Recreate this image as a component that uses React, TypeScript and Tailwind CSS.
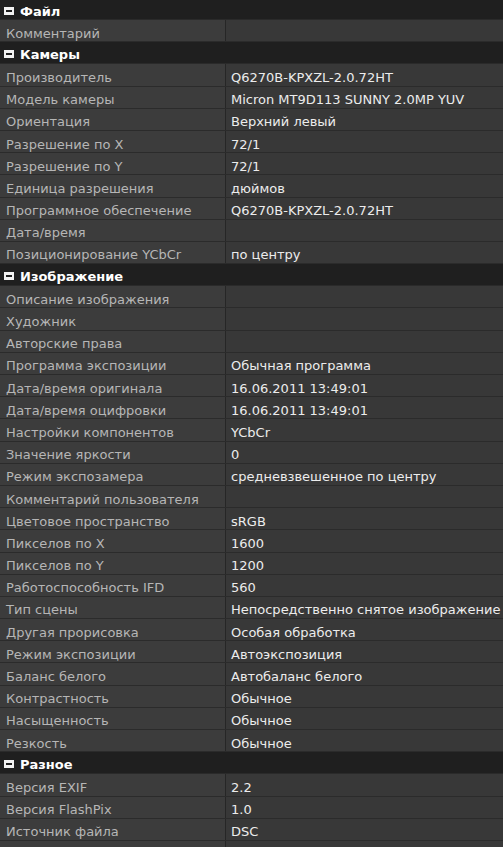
import React from "react";

type Row = [string, string];
type Section = { title: string; rows: Row[] };

const sections: Section[] = [
  { title: "Файл", rows: [["Комментарий", ""]] },
  {
    title: "Камеры",
    rows: [
      ["Производитель", "Q6270B-KPXZL-2.0.72HT"],
      ["Модель камеры", "Micron MT9D113 SUNNY 2.0MP YUV"],
      ["Ориентация", "Верхний левый"],
      ["Разрешение по X", "72/1"],
      ["Разрешение по Y", "72/1"],
      ["Единица разрешения", "дюймов"],
      ["Программное обеспечение", "Q6270B-KPXZL-2.0.72HT"],
      ["Дата/время", ""],
      ["Позиционирование YCbCr", "по центру"],
    ],
  },
  {
    title: "Изображение",
    rows: [
      ["Описание изображения", ""],
      ["Художник", ""],
      ["Авторские права", ""],
      ["Программа экспозиции", "Обычная программа"],
      ["Дата/время оригинала", "16.06.2011 13:49:01"],
      ["Дата/время оцифровки", "16.06.2011 13:49:01"],
      ["Настройки компонентов", "YCbCr"],
      ["Значение яркости", "0"],
      ["Режим экспозамера", "средневзвешенное по центру"],
      ["Комментарий пользователя", ""],
      ["Цветовое пространство", "sRGB"],
      ["Пикселов по X", "1600"],
      ["Пикселов по Y", "1200"],
      ["Работоспособность IFD", "560"],
      ["Тип сцены", "Непосредственно снятое изображение"],
      ["Другая прорисовка", "Особая обработка"],
      ["Режим экспозиции", "Автоэкспозиция"],
      ["Баланс белого", "Автобаланс белого"],
      ["Контрастность", "Обычное"],
      ["Насыщенность", "Обычное"],
      ["Резкость", "Обычное"],
    ],
  },
  {
    title: "Разное",
    rows: [
      ["Версия EXIF", "2.2"],
      ["Версия FlashPix", "1.0"],
      ["Источник файла", "DSC"],
      ["", ""],
    ],
  },
];

function Header({ title, first }: { title: string; first?: boolean }) {
  return (
    <div
      className={`flex items-center bg-[#1f1f1f] border-b border-[#2a2a2a] pt-[3px] ${
        first ? "h-[20px]" : "h-[22.2px]"
      }`}
    >
      <span className="ml-[4px] mr-[6px] flex h-[8px] w-[10px] items-center justify-center bg-[#f2f2f2]">
        <span className="h-[2px] w-[6px] bg-[#1f1f1f]" />
      </span>
      <span className="text-[13px] font-bold leading-none text-white">{title}</span>
    </div>
  );
}

function DataRow({ label, value }: { label: string; value: string }) {
  return (
    <div className="flex h-[22.2px] border-b border-[#2b2b2b]">
      <div className="flex w-[225px] shrink-0 items-center bg-[#3c3c3c] pl-[6px] pt-[5px] text-[13px] leading-none text-[#b6b6b6] whitespace-nowrap overflow-hidden">
        {label}
      </div>
      <div className="w-px bg-[#262626]" />
      <div className="flex flex-1 items-center bg-[#383838] pl-[5px] pt-[5px] text-[13px] leading-none text-[#ececec] whitespace-nowrap overflow-hidden">
        {value}
      </div>
    </div>
  );
}

export default function App() {
  return (
    <div
      className="h-[847px] w-[503px] overflow-hidden bg-[#1f1f1f]"
      style={{ fontFamily: '"DejaVu Sans", Verdana, sans-serif' }}
    >
      {sections.map((s, i) => (
        <div key={s.title}>
          <Header title={s.title} first={i === 0} />
          {s.rows.map(([l, v], j) => (
            <DataRow key={j} label={l} value={v} />
          ))}
        </div>
      ))}
    </div>
  );
}
